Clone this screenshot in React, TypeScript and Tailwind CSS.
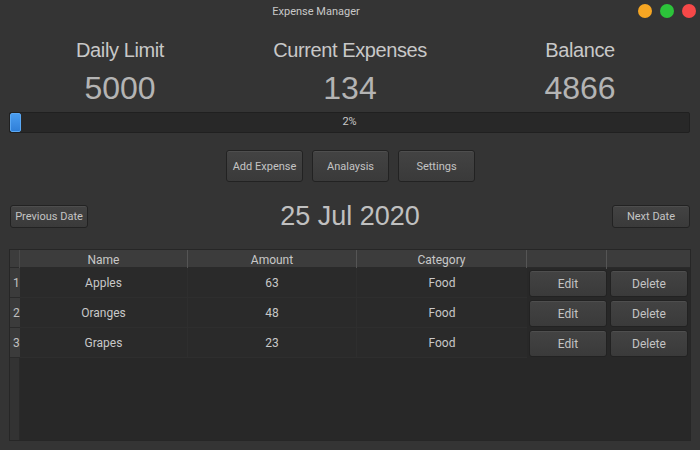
import React from 'react'

const rows = [
  { name: 'Apples', amount: 63, category: 'Food' },
  { name: 'Oranges', amount: 48, category: 'Food' },
  { name: 'Grapes', amount: 23, category: 'Food' },
]

const stats = [
  { label: 'Daily Limit', value: '5000' },
  { label: 'Current Expenses', value: '134' },
  { label: 'Balance', value: '4866' },
]

const btn =
  'flex items-center justify-center rounded-[3px] border border-[#222222] bg-gradient-to-b from-[#434343] to-[#3a3a3a] text-[11px] text-[#c4c4c4] shadow-[inset_0_1px_0_rgba(255,255,255,0.06)]'

const grid = 'grid grid-cols-[10px_168px_169px_170px_80px_83px]'

export default function App() {
  return (
    <div
      className="w-[700px] h-[450px] bg-[#343434] flex flex-col overflow-hidden"
      style={{ fontFamily: 'Roboto, "Liberation Sans", sans-serif' }}
    >
      {/* title bar */}
      <div className="relative h-[24px] flex items-center justify-center pr-[68px]">
        <span className="text-[11px] text-[#c8c8c8]">Expense Manager</span>
        <div className="absolute right-[4px] top-[4px] flex gap-[8px]">
          <span className="w-[14px] h-[14px] rounded-full bg-[#f6a623]" />
          <span className="w-[14px] h-[14px] rounded-full bg-[#2cc33a]" />
          <span className="w-[14px] h-[14px] rounded-full bg-[#f64848]" />
        </div>
      </div>

      {/* stats */}
      <div
        className="grid grid-cols-3 px-[5px] mt-[14px]"
        style={{ fontFamily: '"Liberation Sans", Arial, sans-serif' }}
      >
        {stats.map((s) => (
          <div key={s.label} className="flex flex-col items-center">
            <span className="text-[20px] leading-[24px] tracking-[-0.4px] text-[#c8c8c8]">{s.label}</span>
            <span className="mt-[7px] text-[32px] leading-[38px] text-[#b4b4b4]">{s.value}</span>
          </div>
        ))}
      </div>

      {/* progress */}
      <div className="relative ml-[9px] mr-[10px] mt-[5px] h-[21px] rounded-[2px] border border-[#202020] bg-[#282828]">
        <div className="absolute left-0 top-0 bottom-0 w-[11px] rounded-[2px] border border-[#5aa8f4] bg-gradient-to-b from-[#4a9df0] to-[#2f7fd8]" />
        <div className="absolute inset-0 flex items-center justify-center text-[11px] text-[#c8c8c8]">2%</div>
      </div>

      {/* actions */}
      <div className="mt-[17px] flex justify-center gap-[9px] pl-[1px]">
        <button className={`${btn} w-[77px] h-[32px] pt-[2px]`}>Add Expense</button>
        <button className={`${btn} w-[77px] h-[32px] pt-[2px]`}>Analaysis</button>
        <button className={`${btn} w-[77px] h-[32px] pt-[2px]`}>Settings</button>
      </div>

      {/* date nav */}
      <div className="mt-[23px] flex items-center justify-between pl-[10px] pr-[10px] h-[23px]">
        <button className={`${btn} w-[78px] h-[23px] pt-[1px]`}>Previous Date</button>
        <span
          className="text-[27px] leading-none text-[#c0c0c0]"
          style={{ fontFamily: '"Liberation Sans", Arial, sans-serif' }}
        >
          25 Jul 2020
        </span>
        <button className={`${btn} w-[78px] h-[23px] pt-[1px]`}>Next Date</button>
      </div>

      {/* table */}
      <div className="mt-[21px] ml-[9px] w-[682px] h-[192px] border border-[#262626] bg-[#282828] flex flex-col">
        <div className={`${grid} h-[18px] bg-[#3c3c3c] border-b border-[#2a2a2a] text-[12px] text-[#c8c8c8]`}>
          <div className="border-r border-[#4a4a4a]" />
          <div className="flex items-center justify-center pt-[1px] border-r border-[#555555]">Name</div>
          <div className="flex items-center justify-center pt-[1px] border-r border-[#555555]">Amount</div>
          <div className="flex items-center justify-center pt-[1px] border-r border-[#555555]">Category</div>
          <div className="border-r border-[#555555]" />
          <div />
        </div>
        {rows.map((r, i) => (
          <div key={r.name} className={`${grid} h-[30px] text-[12px] text-[#c8c8c8]`}>
            <div className="flex items-center pl-[3px] pt-[1px] bg-[#3b3b3b] border-b border-[#2a2a2a] text-[#c0c0c0]">{i + 1}</div>
            <div className="flex items-center justify-center pt-[1px] border-r border-b border-[#2e2e2e] bg-[#2a2a2a]">{r.name}</div>
            <div className="flex items-center justify-center pt-[1px] border-r border-b border-[#2e2e2e] bg-[#2a2a2a]">{r.amount}</div>
            <div className="flex items-center justify-center pt-[1px] border-b border-[#2e2e2e] bg-[#2a2a2a]">{r.category}</div>
            <div className="flex items-center pl-[2px]">
              <button className={`${btn} w-[78px] h-[27px] text-[12px] pt-[1px]`}>Edit</button>
            </div>
            <div className="flex items-center pl-[3px]">
              <button className={`${btn} w-[78px] h-[27px] text-[12px] pt-[1px]`}>Delete</button>
            </div>
          </div>
        ))}
        <div className="flex-1 flex">
          <div className="w-[10px] bg-[#333333] border-r border-[#2a2a2a]" />
          <div className="flex-1" />
        </div>
      </div>
    </div>
  )
}
